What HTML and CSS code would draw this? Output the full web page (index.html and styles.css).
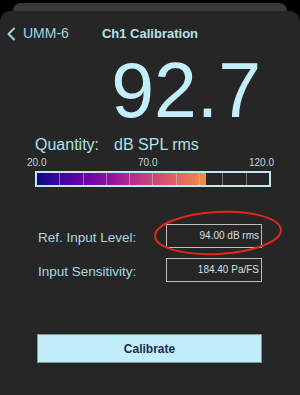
FILE: index.html
```html
<!DOCTYPE html>
<html lang="en">
<head>
  <meta charset="UTF-8">
  <link rel="stylesheet" href="styles.css">
</head>
<body>

<div class="back-sheet"></div>

<div class="sheet">
  <div class="nav">
    <div class="back">
      <svg class="chev" width="10" height="14" viewBox="0 0 10 14">
        <path d="M8 1.5 L2.5 7 L8 12.5" fill="none" stroke="#a2d6de" stroke-width="2" stroke-linecap="round" stroke-linejoin="round"/>
      </svg>
      <span>UMM-6</span>
    </div>
    <div class="title">Ch1 Calibration</div>
    <div></div>
  </div>

  <div class="reading">92.7</div>

  <div class="quantity">Quantity:<span class="unit">dB SPL rms</span></div>

  <div class="scale">
    <span>20.0</span>
    <span>70.0</span>
    <span>120.0</span>
  </div>

  <div class="bar">
    <div class="fill" style="width: 72.7%"></div>
    <div class="cell"></div><div class="cell"></div><div class="cell"></div><div class="cell"></div><div class="cell"></div>
    <div class="cell"></div><div class="cell"></div><div class="cell"></div><div class="cell"></div><div class="cell"></div>
  </div>

  <div class="fields">
    <div class="row">
      <label>Ref. Input Level:</label>
      <div class="box">94.00 dB rms</div>
    </div>
    <div class="row">
      <label>Input Sensitivity:</label>
      <div class="box">184.40 Pa/FS</div>
    </div>
  </div>

  <button class="calibrate">Calibrate</button>

  <!-- red mark around the reference level -->
  <svg class="mark" width="140" height="56" viewBox="0 0 140 56">
    <ellipse cx="68" cy="25" rx="63" ry="21" transform="rotate(-3 68 25)" fill="none" stroke="#e2261c" stroke-width="2"/>
  </svg>
</div>

</body>
</html>
```

FILE: styles.css
```css
html, body { margin: 0; padding: 0; }
body {
  background: #000;
  font-family: "Liberation Sans", Arial, sans-serif;
  width: 300px;
  height: 395px;
  overflow: hidden;
}

.back-sheet {
  margin: 3px 13px 0 13px;
  height: 8px;
  background: #3a3a3a;
  border-radius: 10px 10px 0 0;
}

.sheet {
  position: relative;
  background: #262626;
  border-radius: 10px 10px 0 0;
  height: 384px;
  padding-top: 14px;
  box-sizing: border-box;
}

.nav {
  display: grid;
  grid-template-columns: 1fr auto 1fr;
  align-items: center;
  height: 17px;
}
.back {
  display: flex;
  align-items: center;
  height: 17px;
  color: #a2d6de;
  font-size: 14px;
  line-height: 17px;
  padding-left: 6px;
}
.chev { margin-right: 7px; }
.title {
  color: #b6e3ea;
  font-weight: bold;
  font-size: 13px;
  line-height: 17px;
}

.reading {
  margin: 10px 39px 0 0;
  text-align: right;
  font-size: 77px;
  line-height: 77px;
  color: #c2effb;
}

.quantity {
  margin: 6px 0 0 35px;
  font-size: 16px;
  line-height: 19px;
  color: #b0e0e8;
}
.unit { margin-left: 15px; }

.scale {
  display: flex;
  justify-content: space-between;
  margin: 3px 26px 0 27px;
  font-size: 10px;
  line-height: 12px;
  color: #c9d6d8;
}

.bar {
  position: relative;
  display: flex;
  margin: 2px 29px 0 35px;
  height: 12px;
  border: 2px solid #bfeaf2;
}
.fill {
  position: absolute;
  left: 0;
  top: 0;
  bottom: 0;
  background: linear-gradient(to right, #0d0887 0%, #41049d 13.8%, #6a00a8 27.5%, #8f0da4 41.3%, #b12a90 55%, #cc4778 68.8%, #e16462 82.5%, #f2844b 96.3%, #f58c46 100%);
}
.cell {
  position: relative;
  flex: 1;
}
.cell + .cell { border-left: 1px solid rgba(190, 228, 236, 0.45); }

.fields {
  margin-top: 37px;
  display: flex;
  flex-direction: column;
  gap: 10px;
}
.row {
  display: flex;
  align-items: center;
  padding-left: 38px;
}
.row label {
  width: 128px;
  font-size: 13.5px;
  color: #a8d8e0;
  position: relative;
  top: 1px;
}
.box {
  width: 96px;
  height: 24px;
  box-sizing: border-box;
  border: 1px solid #bdbdbd;
  font-size: 10px;
  line-height: 22px;
  text-align: right;
  padding-right: 2px;
  color: #d2e0e2;
}

.calibrate {
  display: block;
  margin: 52px 0 0 37px;
  width: 225px;
  height: 29px;
  background: #c2eefc;
  border: 1px solid #7a9aa0;
  font-family: "Liberation Sans", Arial, sans-serif;
  font-weight: bold;
  font-size: 12px;
  color: #1b2a4e;
  padding: 0;
}

.mark {
  position: absolute;
  left: 150px;
  top: 197px;
}
```
